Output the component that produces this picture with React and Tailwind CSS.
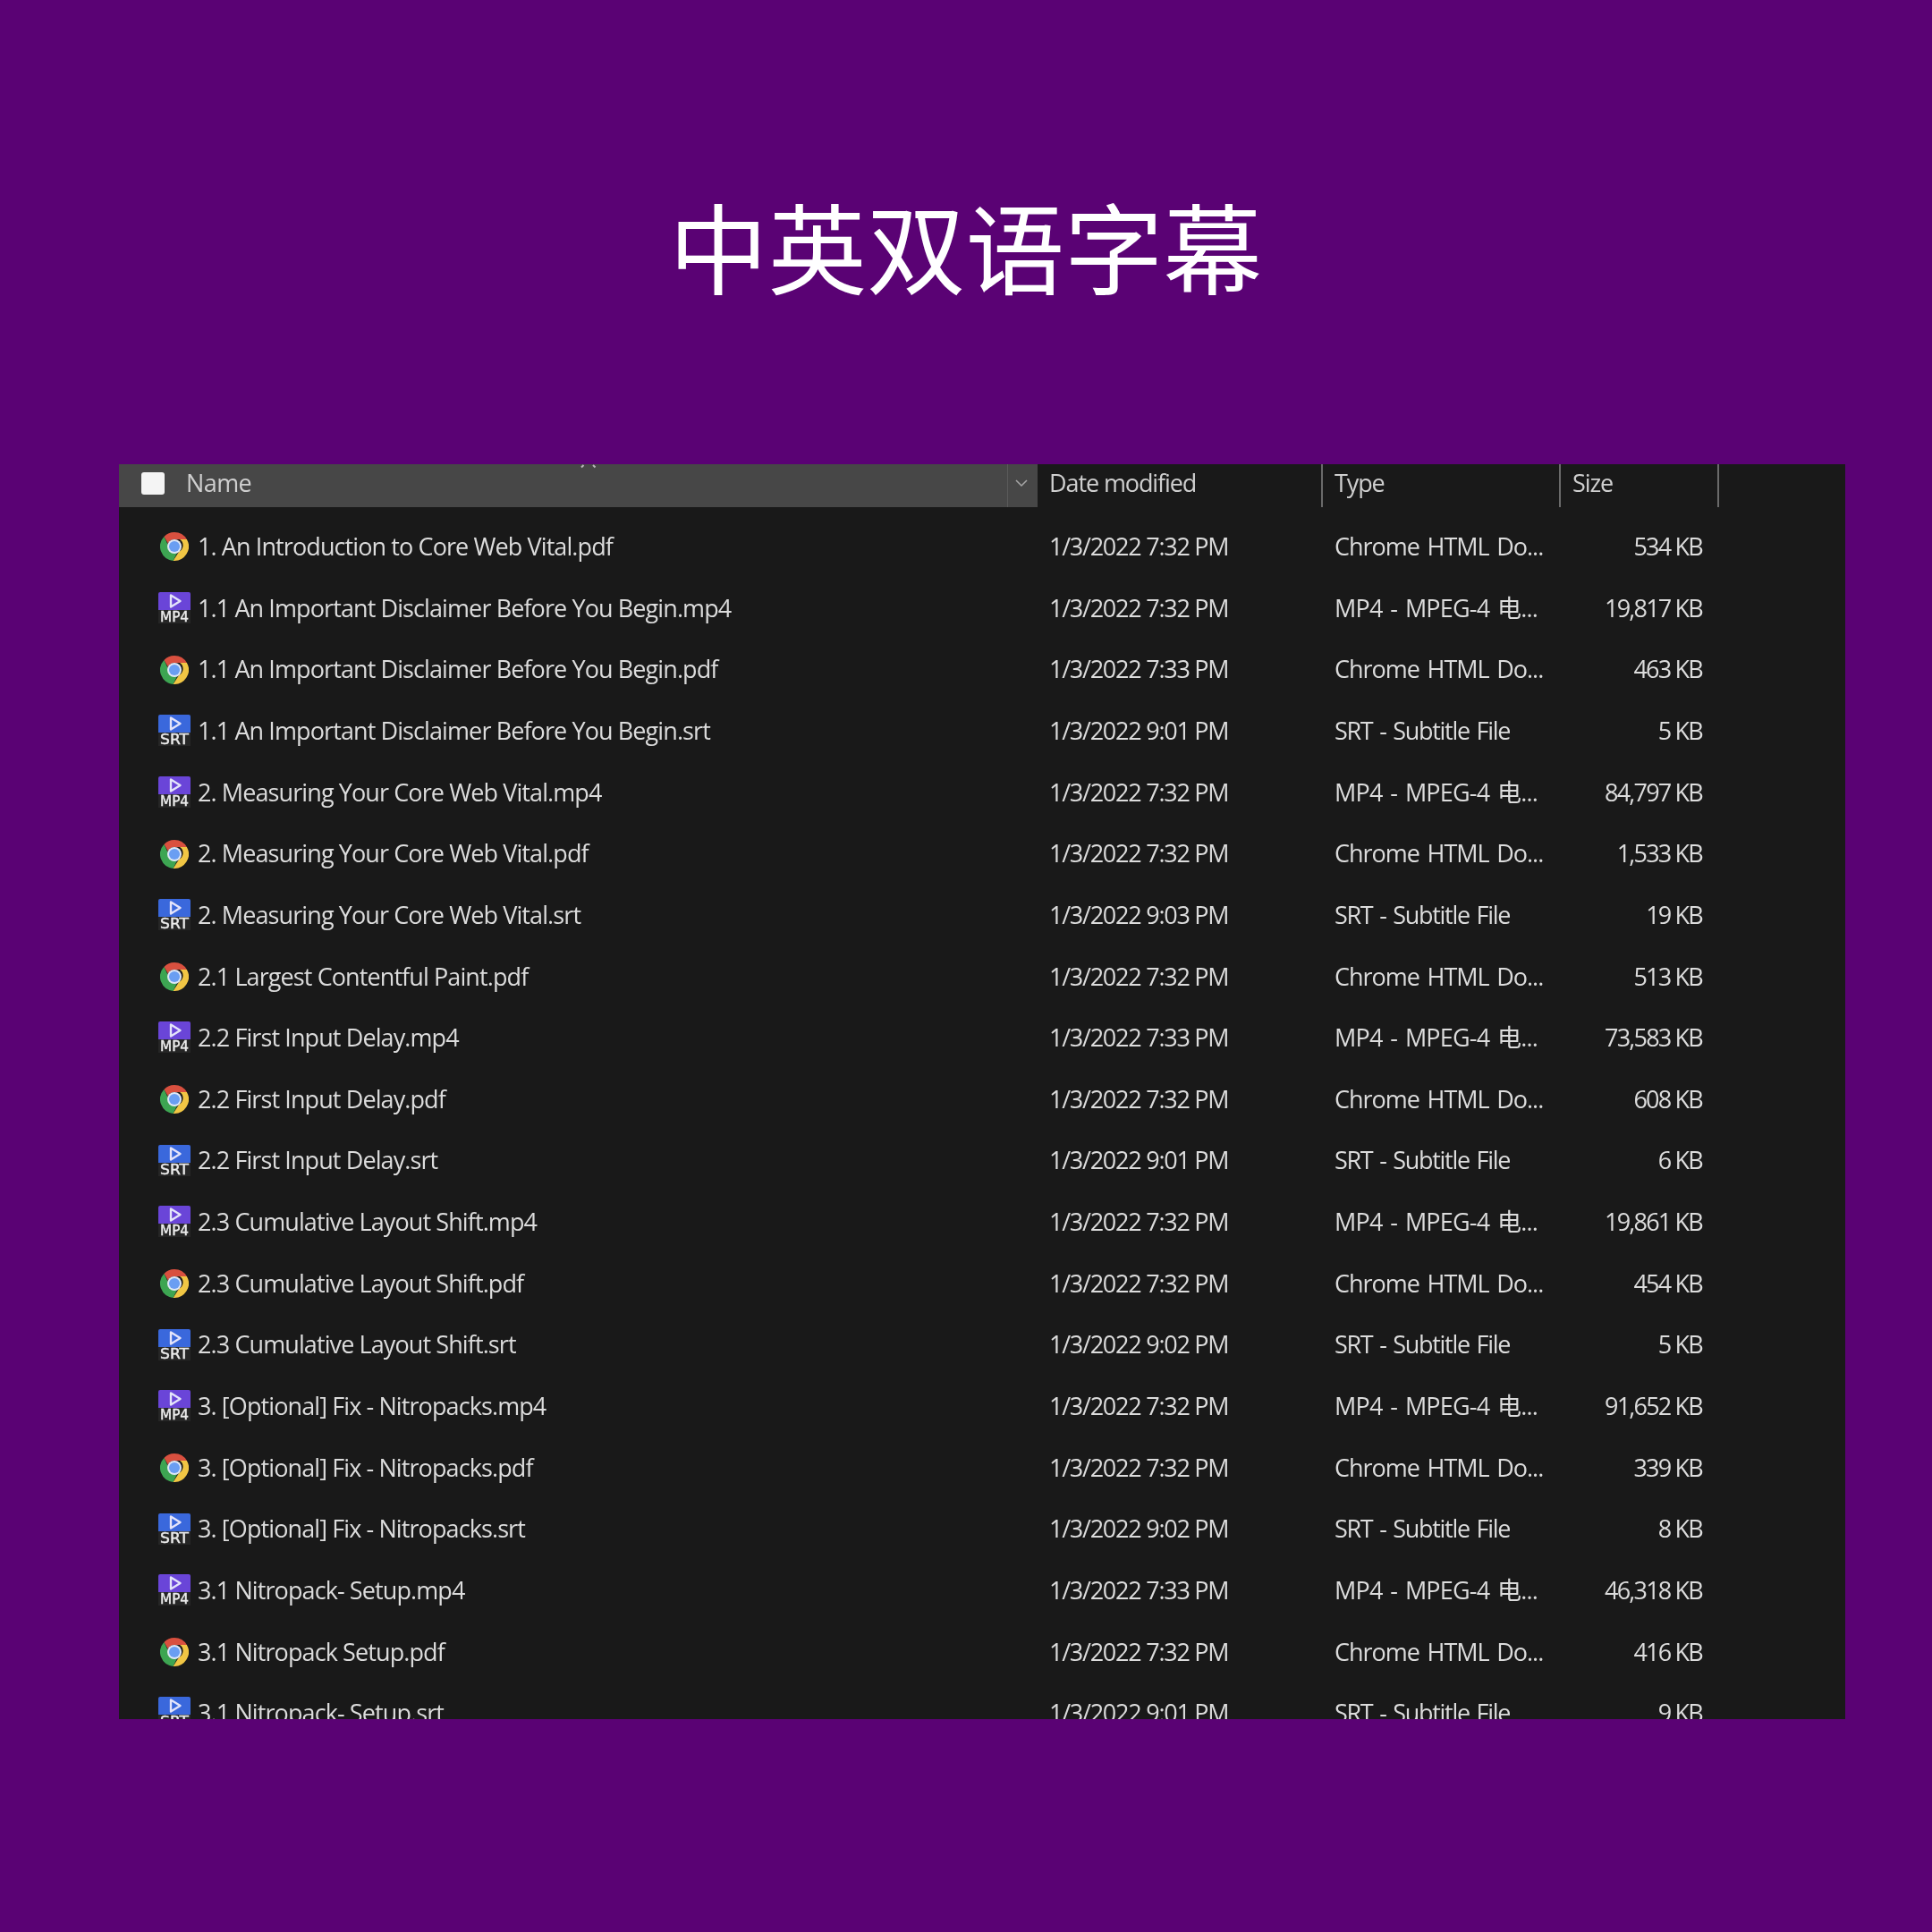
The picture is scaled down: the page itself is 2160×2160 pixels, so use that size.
const KIND = {
  pdf: { type: "Chrome HTML Do...", cls: "tracking-[-1px] [word-spacing:2.5px]" },
  mp4: { type: "MP4 - MPEG-4 电...", cls: "tracking-[-0.8px] [word-spacing:2.5px]" },
  srt: { type: "SRT - Subtitle File", cls: "tracking-[-1.3px] [word-spacing:2px]" },
};

const ROWS = [
  ["1. An Introduction to Core Web Vital.pdf", "pdf", "1/3/2022 7:32 PM", "534 KB"],
  ["1.1 An Important Disclaimer Before You Begin.mp4", "mp4", "1/3/2022 7:32 PM", "19,817 KB"],
  ["1.1 An Important Disclaimer Before You Begin.pdf", "pdf", "1/3/2022 7:33 PM", "463 KB"],
  ["1.1 An Important Disclaimer Before You Begin.srt", "srt", "1/3/2022 9:01 PM", "5 KB"],
  ["2. Measuring Your Core Web Vital.mp4", "mp4", "1/3/2022 7:32 PM", "84,797 KB"],
  ["2. Measuring Your Core Web Vital.pdf", "pdf", "1/3/2022 7:32 PM", "1,533 KB"],
  ["2. Measuring Your Core Web Vital.srt", "srt", "1/3/2022 9:03 PM", "19 KB"],
  ["2.1 Largest Contentful Paint.pdf", "pdf", "1/3/2022 7:32 PM", "513 KB"],
  ["2.2 First Input Delay.mp4", "mp4", "1/3/2022 7:33 PM", "73,583 KB"],
  ["2.2 First Input Delay.pdf", "pdf", "1/3/2022 7:32 PM", "608 KB"],
  ["2.2 First Input Delay.srt", "srt", "1/3/2022 9:01 PM", "6 KB"],
  ["2.3 Cumulative Layout Shift.mp4", "mp4", "1/3/2022 7:32 PM", "19,861 KB"],
  ["2.3 Cumulative Layout Shift.pdf", "pdf", "1/3/2022 7:32 PM", "454 KB"],
  ["2.3 Cumulative Layout Shift.srt", "srt", "1/3/2022 9:02 PM", "5 KB"],
  ["3. [Optional] Fix - Nitropacks.mp4", "mp4", "1/3/2022 7:32 PM", "91,652 KB"],
  ["3. [Optional] Fix - Nitropacks.pdf", "pdf", "1/3/2022 7:32 PM", "339 KB"],
  ["3. [Optional] Fix - Nitropacks.srt", "srt", "1/3/2022 9:02 PM", "8 KB"],
  ["3.1 Nitropack- Setup.mp4", "mp4", "1/3/2022 7:33 PM", "46,318 KB"],
  ["3.1 Nitropack Setup.pdf", "pdf", "1/3/2022 7:32 PM", "416 KB"],
  ["3.1 Nitropack- Setup.srt", "srt", "1/3/2022 9:01 PM", "9 KB"],
];

function ChromeIcon() {
  return (
    <svg width="36" height="36" viewBox="0 0 36 36" className="blur-[0.5px]">
      <path d="M18 2a16 16 0 0 1 13.86 8H18a8 8 0 0 0-7.2 4.6L6.4 7A16 16 0 0 1 18 2z" fill="#d9503f" />
      <path d="M31.86 10A16 16 0 0 1 16.5 33.9l6.5-10a8 8 0 0 0 1-13.9z" fill="#f1c644" />
      <path d="M6.4 7l5 10.5a8 8 0 0 0 9.6 7.4L16.5 33.9A16 16 0 0 1 6.4 7z" fill="#3da552" />
      <circle cx="18" cy="18" r="8" fill="#dfe8f6" />
      <circle cx="18" cy="18" r="6" fill="#6a9ef2" />
    </svg>
  );
}

function BadgeIcon({ color, label }) {
  return (
    <svg width="36" height="36" viewBox="0 0 36 36" className="blur-[0.4px]">
      <path d="M2 0h32a2 2 0 0 1 2 2v18H0V2a2 2 0 0 1 2-2z" fill={color} />
      <path d="M14 3.5v13l10.5-6.5z" fill="none" stroke="#e4e4fa" strokeWidth="2.4" strokeLinejoin="round" />
      <rect x="0" y="20" width="36" height="15" fill="#262626" />
      <text
        x="18"
        y="33"
        textAnchor="middle"
        fontSize="15"
        fontFamily="'DejaVu Sans', sans-serif"
        fill="#ececec"
        stroke="#ececec"
        strokeWidth="0.4"
        textLength="32"
        lengthAdjust="spacingAndGlyphs"
      >
        {label}
      </text>
    </svg>
  );
}

function FileIcon({ kind }) {
  if (kind === "pdf") return <ChromeIcon />;
  if (kind === "mp4") return <BadgeIcon color="#6a45d8" label="MP4" />;
  return <BadgeIcon color="#3a68dc" label="SRT" />;
}

function Row({ name, kind, date, size }) {
  return (
    <div className="flex h-[68.65px] shrink-0 items-center text-[27px] text-[#dcdcdc]">
      <div className="flex w-[1040px] shrink-0 items-center pl-[44px]">
        <FileIcon kind={kind} />
        <span className="ml-[8px] tracking-[-0.9px]">{name}</span>
      </div>
      <div className="w-[319px] shrink-0 tracking-[-1.25px]">{date}</div>
      <div className={"w-[250px] shrink-0 whitespace-nowrap " + KIND[kind].cls}>{KIND[kind].type}</div>
      <div className="w-[161px] shrink-0 text-right tracking-[-1.8px]">{size}</div>
    </div>
  );
}

export default function App() {
  return (
    <div
      className="flex h-[2160px] w-[2160px] flex-col bg-[#5a0274] px-[133px] pt-[201px]"
      style={{ fontFamily: "'Open Sans', 'Noto Sans CJK SC', sans-serif" }}
    >
      <h1
        className="h-[318px] text-center text-[110.5px] leading-[144px] font-normal text-white"
        style={{ fontFamily: "'Noto Sans CJK SC', sans-serif" }}
      >
        <span className="ml-[-1px]">中英双语字幕</span>
      </h1>

      <div className="flex h-[1403px] w-[1930px] flex-col overflow-hidden bg-[#191919] blur-[0.45px]">
        <div className="relative flex h-[48px] shrink-0 items-center text-[27px] text-[#cfcfcf]">
          <div className="flex h-full w-[993px] items-center bg-[#474747] pl-[25px]">
            <div className="mt-[-6px] h-[25px] w-[26px] rounded-[3px] bg-[#f4f4f4]" />
            <span className="ml-[24px] mt-[-5px] tracking-[-0.6px]">Name</span>
          </div>
          <div className="flex h-full w-[34px] items-center justify-center border-l border-[#5a5a5a] bg-[#474747]">
            <svg width="14" height="10" viewBox="0 0 14 10" className="mb-[6px] ml-[-4px]">
              <path d="M1 2l6 6 6-6" fill="none" stroke="#a8a8a8" strokeWidth="1.5" />
            </svg>
          </div>
          <div className="flex h-full w-[317px] items-center pb-[5px] pl-[13px] tracking-[-1.1px]">Date modified</div>
          <div className="flex h-full w-[266px] items-center border-l-2 border-[#6a6a6a] pb-[5px] pl-[13px] tracking-[-1.1px]">Type</div>
          <div className="flex h-full w-[177px] items-center border-l-2 border-[#6a6a6a] pb-[5px] pl-[13px] tracking-[-1.1px]">Size</div>
          <div className="h-full border-l-2 border-[#6a6a6a]" />
          <svg width="18" height="5" viewBox="0 0 18 5" className="absolute top-0 left-[516px]">
            <path d="M1 3.5 3.5 1M14 1l2.5 2.5" fill="none" stroke="#b8b8b8" strokeWidth="2" />
          </svg>
        </div>
        <div className="flex flex-col pt-[10px]">
          {ROWS.map((r) => (
            <Row key={r[0]} name={r[0]} kind={r[1]} date={r[2]} size={r[3]} />
          ))}
        </div>
      </div>
    </div>
  );
}
